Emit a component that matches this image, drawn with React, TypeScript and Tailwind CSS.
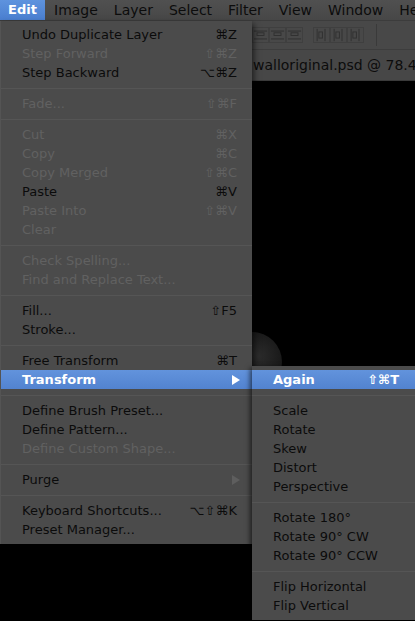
import React from 'react';

type Item =
  | { sep: true }
  | { label: string; key?: string; off?: boolean; sub?: boolean; hot?: boolean };

const FONT = { fontFamily: '"DejaVu Sans", "Liberation Sans", sans-serif' };

const editItems: Item[] = [
  { label: 'Undo Duplicate Layer', key: '⌘Z' },
  { label: 'Step Forward', key: '⇧⌘Z', off: true },
  { label: 'Step Backward', key: '⌥⌘Z' },
  { sep: true },
  { label: 'Fade...', key: '⇧⌘F', off: true },
  { sep: true },
  { label: 'Cut', key: '⌘X', off: true },
  { label: 'Copy', key: '⌘C', off: true },
  { label: 'Copy Merged', key: '⇧⌘C', off: true },
  { label: 'Paste', key: '⌘V' },
  { label: 'Paste Into', key: '⇧⌘V', off: true },
  { label: 'Clear', off: true },
  { sep: true },
  { label: 'Check Spelling...', off: true },
  { label: 'Find and Replace Text...', off: true },
  { sep: true },
  { label: 'Fill...', key: '⇧F5' },
  { label: 'Stroke...' },
  { sep: true },
  { label: 'Free Transform', key: '⌘T' },
  { label: 'Transform', sub: true, hot: true },
  { sep: true },
  { label: 'Define Brush Preset...' },
  { label: 'Define Pattern...' },
  { label: 'Define Custom Shape...', off: true },
  { sep: true },
  { label: 'Purge', sub: true },
  { sep: true },
  { label: 'Keyboard Shortcuts...', key: '⌥⇧⌘K' },
  { label: 'Preset Manager...' },
];

const transformItems: Item[] = [
  { label: 'Again', key: '⇧⌘T', hot: true },
  { sep: true },
  { label: 'Scale' },
  { label: 'Rotate' },
  { label: 'Skew' },
  { label: 'Distort' },
  { label: 'Perspective' },
  { sep: true },
  { label: 'Rotate 180°' },
  { label: 'Rotate 90° CW' },
  { label: 'Rotate 90° CCW' },
  { sep: true },
  { label: 'Flip Horizontal' },
  { label: 'Flip Vertical' },
];

function Row({ item, padL, padR }: { item: Item; padL: string; padR: string }) {
  if ('sep' in item) {
    return (
      <div className="h-[12px] flex items-center">
        <div className="h-px w-full bg-[#555555]" />
      </div>
    );
  }
  const color = item.hot ? 'text-white' : item.off ? 'text-[#616161]' : 'text-[#0b0b0b]';
  return (
    <div
      className={`h-[19px] flex items-center justify-between ${padL} ${padR} ${color} ${
        item.hot ? 'bg-gradient-to-b from-[#6293dc] to-[#5283d0]' : ''
      }`}
    >
      <span className={item.hot ? 'font-bold' : ''}>{item.label}</span>
      {item.key && <span className={item.hot ? 'font-bold' : ''}>{item.key}</span>}
      {item.sub && (
        <svg width="8" height="10" viewBox="0 0 8 10" className="-mr-[3px]">
          <path d="M0 0 L8 5 L0 10 Z" fill={item.hot ? '#ffffff' : '#5e5e5e'} />
        </svg>
      )}
    </div>
  );
}

function AlignIcon({ kind }: { kind: 'h' | 'v' }) {
  return (
    <svg width="17" height="16" viewBox="0 0 17 16" className="border border-[#3f3f3f]">
      {kind === 'h' ? (
        <g stroke="#2e2e2e" fill="none" strokeWidth="1">
          <line x1="1" y1="3.5" x2="16" y2="3.5" />
          <rect x="4.5" y="5.5" width="8" height="3" />
          <line x1="1" y1="12.5" x2="16" y2="12.5" />
        </g>
      ) : (
        <g stroke="#2e2e2e" fill="none" strokeWidth="1">
          <line x1="3.5" y1="1" x2="3.5" y2="15" />
          <rect x="5.5" y="4.5" width="4" height="7" />
          <line x1="12.5" y1="1" x2="12.5" y2="15" />
        </g>
      )}
    </svg>
  );
}

export default function App() {
  const bar = ['Image', 'Layer', 'Select', 'Filter', 'View', 'Window', 'Help'];
  return (
    <div className="relative w-[415px] h-[621px] overflow-hidden bg-black" style={FONT}>
      {/* menu bar */}
      <div className="h-[21px] flex items-center bg-gradient-to-b from-[#505050] to-[#474747] border-b border-[#3c3c3c] text-[14px] text-[#0c0c0c]">
        <div className="h-full w-[45px] shrink-0 flex items-center justify-center bg-gradient-to-b from-[#5e93de] to-[#4a7fd0] text-white font-bold text-[13px]">
          Edit
        </div>
        <div className="flex gap-[16px] pl-[9px] whitespace-nowrap">
          {bar.map((b) => (
            <span key={b}>{b}</span>
          ))}
        </div>
      </div>

      {/* options toolbar */}
      <div className="h-[29px] bg-[#484848] border-b border-[#3d3d3d] flex items-center pl-[252px] gap-[8px]">
        <div className="flex">
          <AlignIcon kind="h" />
          <AlignIcon kind="h" />
          <AlignIcon kind="h" />
        </div>
        <div className="flex ml-[2px]">
          <AlignIcon kind="v" />
          <AlignIcon kind="v" />
          <AlignIcon kind="v" />
        </div>
        <div className="w-px h-[22px] bg-[#3a3a3a] ml-[4px]" />
      </div>

      {/* document tab */}
      <div className="h-[31px] bg-[#474747] border-b border-[#3a3a3a] flex items-center pl-[253px] text-[14px] text-[#0c0c0c] whitespace-nowrap">
        walloriginal.psd @ 78.4% (RGB/8)
      </div>

      {/* canvas hints */}
      <div className="absolute left-[222px] top-[332px] w-[60px] h-[60px] rounded-full bg-[radial-gradient(circle_at_60%_40%,#2c2c2c,#161616_55%,#000_72%)]" />
      <div className="absolute left-[300px] top-[520px] w-[120px] h-[110px] rounded-full bg-[radial-gradient(circle,#160404,#000_70%)]" />

      {/* Edit menu */}
      <div className="absolute left-0 top-[21px] w-[252px] pt-[4px] pb-[5px] bg-[#4b4b4b] border-l border-[#545454] shadow-[2px_3px_6px_rgba(0,0,0,0.6)] text-[13px]">
        {editItems.map((it, i) => (
          <Row key={i} item={it} padL="pl-[21px]" padR="pr-[15px]" />
        ))}
      </div>

      {/* Transform submenu */}
      <div className="absolute left-[252px] top-[366px] w-[166px] pt-[4px] pb-[5px] bg-[#4b4b4b] shadow-[-2px_2px_5px_rgba(0,0,0,0.6)] text-[13px]">
        {transformItems.map((it, i) => (
          <Row key={i} item={it} padL="pl-[21px]" padR="pr-[19px]" />
        ))}
      </div>
    </div>
  );
}
